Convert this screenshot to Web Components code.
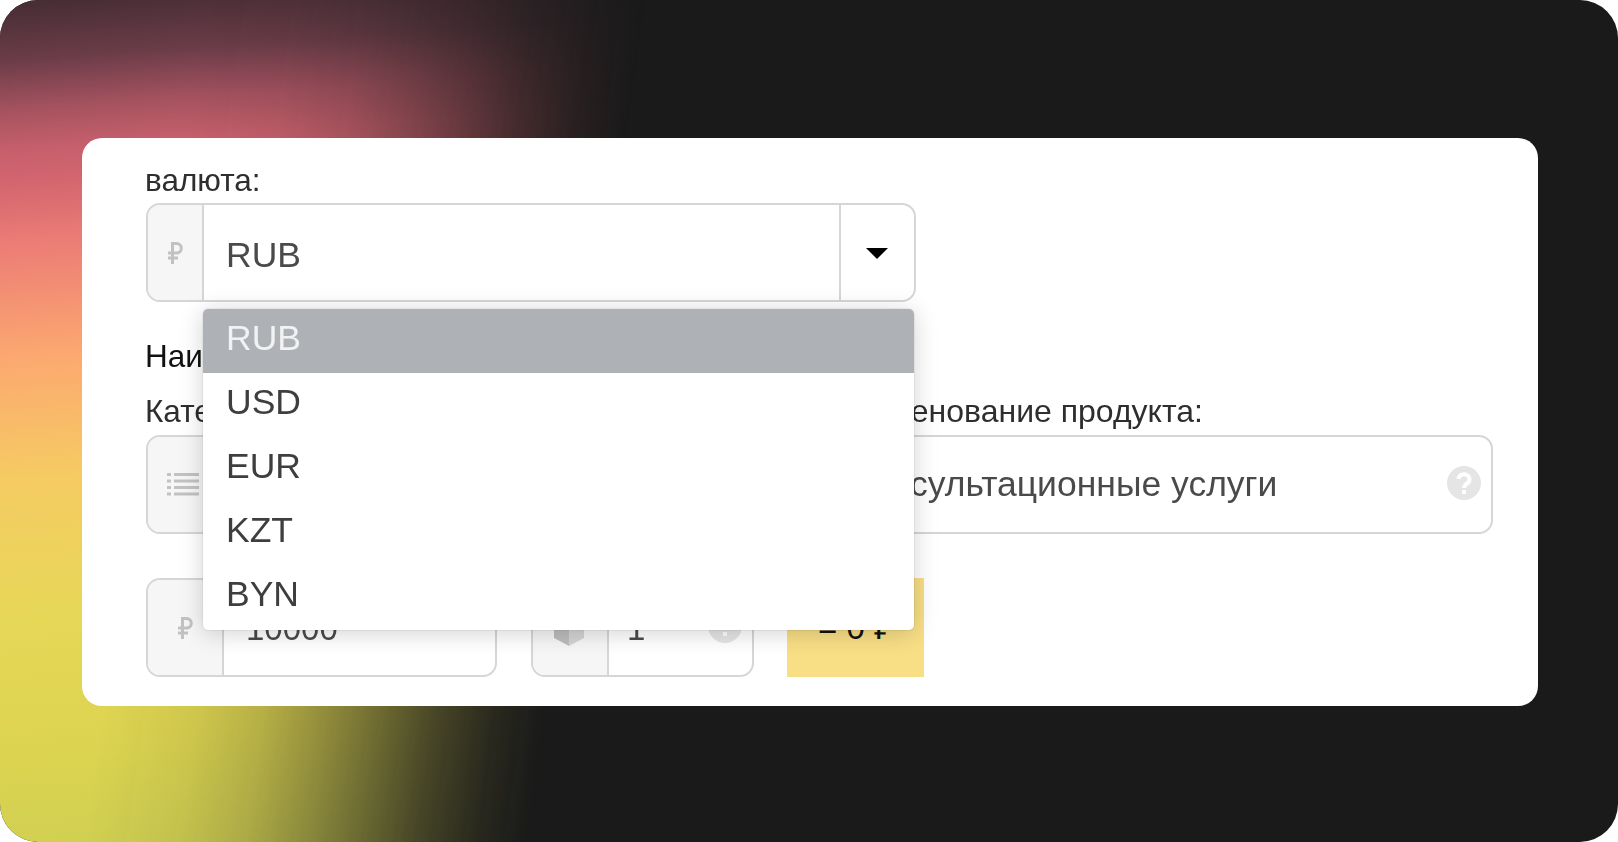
<!DOCTYPE html>
<html lang="ru">
<head>
<meta charset="utf-8">
<title>Валюта</title>
<style>
  html, body { margin: 0; padding: 0; background: #fff; }
  body { font-family: "Liberation Sans", Arial, sans-serif; }
</style>
</head>
<body>
<app-screen>
  <form-panel>
    <field-label>валюта:</field-label>
    <input-group style="width:770px;--value-pad:22px;--value-line:101px" value="RUB" addon-width="58" caret>
      <svg slot="addon" width="15" height="22" viewBox="0 0 15 22"><path d="M4.500 22V1.500h4a4.800 4.800 0 0 1 0 9.600H0M0 16h10" fill="none" stroke="#c2c2c2" stroke-width="3"/></svg>
    </input-group>

    <field-label class="title">Наименование</field-label>

    <two-cols>
      <div slot="left">
        <field-label style="margin-bottom:6px">Категория:</field-label>
        <input-group value="Услуги" addon-width="74">
          <svg slot="addon" width="32" height="25" viewBox="0 0 32 25" fill="#c2c2c2"><rect x="0" y="1" width="4" height="3"/><rect x="7" y="1" width="25" height="3"/><rect x="0" y="7.500" width="4" height="3"/><rect x="7" y="7.500" width="25" height="3"/><rect x="0" y="14" width="4" height="3"/><rect x="7" y="14" width="25" height="3"/><rect x="0" y="20.500" width="4" height="3"/><rect x="7" y="20.500" width="25" height="3"/></svg>
        </input-group>
      </div>
      <div slot="right">
        <field-label style="font-size:32px;margin-bottom:6px">Наименование продукта:</field-label>
        <input-group style="--value-pad:17px;--value-line:94px" value="Консультационные услуги" no-addon>
          <svg slot="trail" width="34" height="34" viewBox="0 0 34 34"><circle cx="17" cy="17" r="17" fill="#e5e5e5"/><path d="M11.500 13a5.500 5 0 1 1 8.500 4.500c-2 1.400-3 2.200-3 4.500" fill="none" stroke="#fff" stroke-width="4"/><rect x="15" y="24" width="4" height="4" fill="#fff"/></svg>
        </input-group>
      </div>
    </two-cols>

    <price-row>
      <input-group style="width:351px;--value-size:33px;--value-pad:22px" value="10000" addon-width="78">
        <svg slot="addon" width="15" height="22" viewBox="0 0 15 22"><path d="M4.500 22V1.500h4a4.800 4.800 0 0 1 0 9.600H0M0 16h10" fill="none" stroke="#c2c2c2" stroke-width="3"/></svg>
      </input-group>
      <input-group style="width:223px;--value-size:33px;--value-pad:18px" value="1" addon-width="78">
        <svg slot="addon" style="margin-right:3px" width="30" height="36" viewBox="0 0 30 36"><path d="M15 0 30 7 15 13 0 7z" fill="#dcdcdc"/><path d="M30 9 15 15v21l15-8z" fill="#d4d4d4"/><path d="M0 9 15 15v21L0 28z" fill="#bdbdbd"/></svg>
        <svg slot="trail" width="34" height="34" viewBox="0 0 34 34"><circle cx="17" cy="17" r="17" fill="#e5e5e5"/><rect x="15" y="7" width="4" height="13" fill="#fff"/><rect x="15" y="23" width="4" height="4" fill="#fff"/></svg>
      </input-group>
      <total-badge>= 0 ₽</total-badge>
    </price-row>

    <drop-menu>
      <menu-item selected>RUB</menu-item>
      <menu-item>USD</menu-item>
      <menu-item>EUR</menu-item>
      <menu-item>KZT</menu-item>
      <menu-item>BYN</menu-item>
    </drop-menu>
  </form-panel>
</app-screen>

<script>
const screenTpl = document.createElement('template');
screenTpl.innerHTML = `
  <style>
    :host {
      display: block;
      position: relative;
      width: 1618px;
      height: 842px;
      box-sizing: border-box;
      padding: 138px 80px 136px 82px;
      border-radius: 38px;
      overflow: hidden;
      background: #1a1a1a;
    }
    .glow {
      position: absolute;
      inset: 0;
      background: linear-gradient(176deg, #452c33 0, #6a3c48 60px, #a5525f 110px, #c65f6c 150px, #d4666f 185px, #ec7d76 245px, #fca970 360px, #f5cb62 480px, #e6d757 620px, #dcd450 750px, #d0cf52 860px);
      -webkit-mask-image: linear-gradient(98deg, #000 200px, rgba(0,0,0,.93) 290px, rgba(0,0,0,.8) 360px, rgba(0,0,0,.62) 420px, rgba(0,0,0,.45) 470px, rgba(0,0,0,.24) 530px, rgba(0,0,0,.08) 590px, transparent 640px);
      mask-image: linear-gradient(98deg, #000 200px, rgba(0,0,0,.93) 290px, rgba(0,0,0,.8) 360px, rgba(0,0,0,.62) 420px, rgba(0,0,0,.45) 470px, rgba(0,0,0,.24) 530px, rgba(0,0,0,.08) 590px, transparent 640px);
    }
    ::slotted(*) { position: relative; }
  </style>
  <div class="glow"></div>
  <slot></slot>
`;
class AppScreen extends HTMLElement {
  constructor() {
    super();
    this._shadowRoot = this.attachShadow({ mode: 'open' });
    this._shadowRoot.appendChild(screenTpl.content.cloneNode(true));
  }
}
customElements.define('app-screen', AppScreen);

const panelTpl = document.createElement('template');
panelTpl.innerHTML = `
  <style>
    :host {
      display: block;
      height: 100%;
      background: #fff;
      border-radius: 20px;
      color: #333;
      font-family: "Liberation Sans", Arial, sans-serif;
    }
    /* the reference is an upscaled shot, so its content is a bit soft */
    .content {
      position: relative;
      height: 100%;
      box-sizing: border-box;
      padding: 24px 45px 30px 63px;
      filter: blur(.6px);
    }
  </style>
  <div class="content"><slot></slot></div>
`;
class FormPanel extends HTMLElement {
  constructor() {
    super();
    this._shadowRoot = this.attachShadow({ mode: 'open' });
    this._shadowRoot.appendChild(panelTpl.content.cloneNode(true));
  }
}
customElements.define('form-panel', FormPanel);

const labelTpl = document.createElement('template');
labelTpl.innerHTML = `
  <style>
    :host {
      display: block;
      height: 36px;
      margin-bottom: 5px;
      font-size: 31.500px;
      line-height: 36px;
      color: #2e2e2e;
      white-space: nowrap;
    }
    :host(.title) {
      margin: 36px 0 19px;
      color: #111;
    }
  </style>
  <slot></slot>
`;
class FieldLabel extends HTMLElement {
  constructor() {
    super();
    this._shadowRoot = this.attachShadow({ mode: 'open' });
    this._shadowRoot.appendChild(labelTpl.content.cloneNode(true));
  }
}
customElements.define('field-label', FieldLabel);

const groupTpl = document.createElement('template');
groupTpl.innerHTML = `
  <style>
    :host {
      display: flex;
      box-sizing: border-box;
      height: 99px;
      margin-left: 1px;
      border: 2px solid #d6d6d6;
      border-radius: 14px;
      overflow: hidden;
      background: #fff;
      font-size: var(--value-size, 35.500px);
      color: #4a4a4a;
    }
    .addon {
      display: flex;
      align-items: center;
      justify-content: center;
      flex: none;
      box-sizing: border-box;
      background: #f6f6f6;
      border-right: 2px solid #d6d6d6;
    }
    .value {
      flex: 1;
      min-width: 0;
      padding-left: var(--value-pad, 20px);
      line-height: var(--value-line, 97px);
      white-space: nowrap;
    }
    .trail {
      display: flex;
      align-items: center;
      padding: 0 10px 3px 0;
    }
    .caret {
      display: none;
      align-items: center;
      justify-content: center;
      flex: none;
      box-sizing: border-box;
      width: 75px;
      padding: 2px 2px 0 0;
      border-left: 2px solid #d6d6d6;
    }
    .caret i {
      width: 0;
      height: 0;
      border-left: 11px solid transparent;
      border-right: 11px solid transparent;
      border-top: 11px solid #000;
    }
    :host([caret]) .caret { display: flex; }
    :host([no-addon]) .addon { display: none; }
  </style>
  <div class="addon"><slot name="addon"></slot></div>
  <div class="value"></div>
  <div class="trail"><slot name="trail"></slot></div>
  <div class="caret"><i></i></div>
`;
class InputGroup extends HTMLElement {
  constructor() {
    super();
    this._shadowRoot = this.attachShadow({ mode: 'open' });
    this._shadowRoot.appendChild(groupTpl.content.cloneNode(true));
    this.addon = this._shadowRoot.querySelector('.addon');
    this.valueBox = this._shadowRoot.querySelector('.value');
  }

  connectedCallback() {
    this.render();
  }

  render() {
    this.valueBox.textContent = this.getAttribute('value');
    this.addon.style.width = (this.getAttribute('addon-width') || 58) - 2 + 'px';
  }
}
customElements.define('input-group', InputGroup);

const colsTpl = document.createElement('template');
colsTpl.innerHTML = `
  <style>
    :host {
      display: grid;
      grid-template-columns: 651px 1fr;
      column-gap: 34px;
    }
  </style>
  <slot name="left"></slot>
  <slot name="right"></slot>
`;
class TwoCols extends HTMLElement {
  constructor() {
    super();
    this._shadowRoot = this.attachShadow({ mode: 'open' });
    this._shadowRoot.appendChild(colsTpl.content.cloneNode(true));
  }
}
customElements.define('two-cols', TwoCols);

const rowTpl = document.createElement('template');
rowTpl.innerHTML = `
  <style>
    :host {
      display: flex;
      gap: 33px;
      margin-top: 44px;
    }
  </style>
  <slot></slot>
`;
class PriceRow extends HTMLElement {
  constructor() {
    super();
    this._shadowRoot = this.attachShadow({ mode: 'open' });
    this._shadowRoot.appendChild(rowTpl.content.cloneNode(true));
  }
}
customElements.define('price-row', PriceRow);

const badgeTpl = document.createElement('template');
badgeTpl.innerHTML = `
  <style>
    :host {
      display: block;
      width: 137px;
      height: 99px;
      background: #f8de85;
      color: #111;
      font-size: 33px;
      line-height: 99px;
      text-align: center;
      white-space: nowrap;
    }
  </style>
  <slot></slot>
`;
class TotalBadge extends HTMLElement {
  constructor() {
    super();
    this._shadowRoot = this.attachShadow({ mode: 'open' });
    this._shadowRoot.appendChild(badgeTpl.content.cloneNode(true));
  }
}
customElements.define('total-badge', TotalBadge);

const menuTpl = document.createElement('template');
menuTpl.innerHTML = `
  <style>
    :host {
      display: block;
      position: absolute;
      left: 121px;
      top: 171px;
      width: 711px;
      padding-bottom: 1px;
      background: #fff;
      border-radius: 5px;
      overflow: hidden;
      box-shadow: 0 3px 24px rgba(0,0,0,.18), 0 0 0 1px rgba(0,0,0,.05);
    }
  </style>
  <slot></slot>
`;
class DropMenu extends HTMLElement {
  constructor() {
    super();
    this._shadowRoot = this.attachShadow({ mode: 'open' });
    this._shadowRoot.appendChild(menuTpl.content.cloneNode(true));
  }
}
customElements.define('drop-menu', DropMenu);

const itemTpl = document.createElement('template');
itemTpl.innerHTML = `
  <style>
    :host {
      display: block;
      height: 64px;
      padding-left: 23px;
      font-size: 35.500px;
      line-height: 58px;
      color: #3e3e3e;
    }
    :host([selected]) {
      background: #aeb2b6;
      color: #f2f2f2;
    }
  </style>
  <slot></slot>
`;
class MenuItem extends HTMLElement {
  constructor() {
    super();
    this._shadowRoot = this.attachShadow({ mode: 'open' });
    this._shadowRoot.appendChild(itemTpl.content.cloneNode(true));
  }
}
customElements.define('menu-item', MenuItem);
</script>
</body>
</html>
